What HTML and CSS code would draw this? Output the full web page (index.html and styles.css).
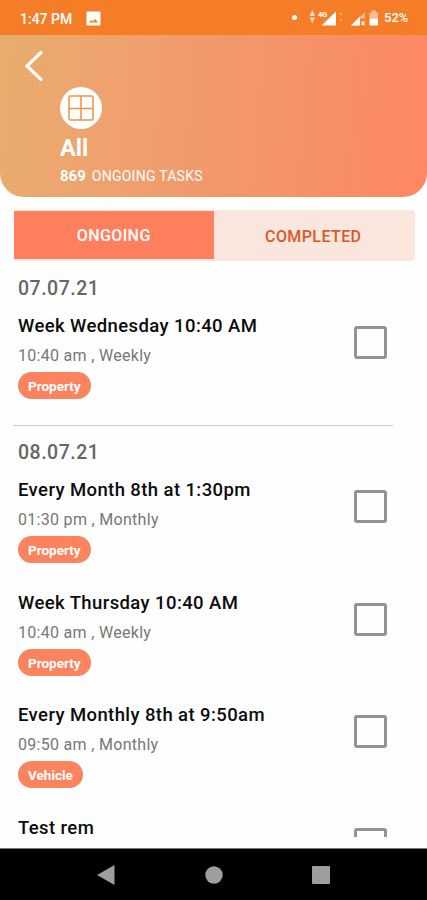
FILE: index.html
```html
<!DOCTYPE html>
<html lang="en">
<head>
    <meta charset="UTF-8">
    <meta name="viewport" content="width=device-width, initial-scale=1.0">
    <title>All Tasks</title>
    <link rel="stylesheet" href="styles.css">
</head>
<body>
    <div class="status-bar">
        <span class="time">1:47 PM</span>
        <svg class="picture" width="15" height="15" viewBox="0 0 15 15">
            <rect x="0.5" y="0.5" width="14" height="14" rx="1" fill="#fff"/>
            <path d="M3 11.5L5 9L6.8 10.5L9.3 8L12 11.5Z" fill="#f67d27"/>
        </svg>
        <svg class="signals" width="90" height="20" viewBox="0 0 90 20">
            <circle cx="5.5" cy="8.5" r="2.5" fill="#fff"/>
            <path d="M20.5 7L23.3 1L26.1 7ZM20.5 8.5L23.3 14.500L26.1 8.5Z" fill="#fff" opacity="0.7"/>
            <text x="29" y="7.5" font-size="7.5" font-weight="bold" fill="#fff">4G</text>
            <path d="M32.5 16.500L47 2.500V16.500Z" fill="#fff"/>
            <path d="M50 6L51.8 3L53.6 6ZM50 10L51.8 13L53.6 10Z" fill="#fff" opacity="0.3"/>
            <path d="M62 16.500L76 3V9.5H70.500V16.500Z" fill="#fff" opacity="0.45"/>
            <path d="M62 16.500L71 7.5V16.500Z" fill="#fff"/>
            <path d="M72.500 12.500L75.500 16M75.500 12.500L72.500 16" stroke="#fff" stroke-width="1.2"/>
            <path d="M80.500 3.500H83V1.500H87V3.500H89V9.500H80.500Z" fill="#fff" opacity="0.5"/>
            <path d="M80.500 9.500H89V16.500H80.500Z" fill="#fff"/>
        </svg>
        <span class="battery">52%</span>
    </div>

    <div class="header">
        <a href="#" class="back">
            <svg width="20" height="32" viewBox="0 0 20 32">
                <path d="M17 2.5L3 16L17 29.5" fill="none" stroke="#fff" stroke-width="3.2" stroke-linecap="round"/>
            </svg>
        </a>
        <div class="category">
            <div class="category-icon">
                <svg width="26" height="26" viewBox="0 0 26 26" fill="none" stroke="#ee9340" stroke-width="1.5">
                    <rect x="1" y="1" width="24" height="24" rx="1.5"/>
                    <path d="M13 1V25M1 13.5H25"/>
                </svg>
            </div>
            <h1>All</h1>
            <p><b>869</b><span>ONGOING TASKS</span></p>
        </div>
    </div>

    <div class="tabs">
        <a href="#" class="tab active"><span>ONGOING</span></a>
        <a href="#" class="tab"><span>COMPLETED</span></a>
    </div>

    <div class="list">
        <h2>07.07.21</h2>
        <div class="task">
            <div class="info">
                <h3>Week Wednesday 10:40 AM</h3>
                <p>10:40 am , Weekly</p>
                <span class="tag">Property</span>
            </div>
            <span class="checkbox"></span>
        </div>
        <hr>
        <h2>08.07.21</h2>
        <div class="task">
            <div class="info">
                <h3>Every Month 8th at 1:30pm</h3>
                <p>01:30 pm , Monthly</p>
                <span class="tag">Property</span>
            </div>
            <span class="checkbox"></span>
        </div>
        <div class="task">
            <div class="info">
                <h3>Week Thursday 10:40 AM</h3>
                <p>10:40 am , Weekly</p>
                <span class="tag">Property</span>
            </div>
            <span class="checkbox"></span>
        </div>
        <div class="task">
            <div class="info">
                <h3>Every Monthly 8th at 9:50am</h3>
                <p>09:50 am , Monthly</p>
                <span class="tag">Vehicle</span>
            </div>
            <span class="checkbox"></span>
        </div>
        <div class="task">
            <div class="info">
                <h3>Test rem</h3>
            </div>
            <span class="checkbox"></span>
        </div>
    </div>

    <div class="nav-bar">
        <svg width="20" height="22" viewBox="0 0 20 22"><path d="M1 11L18.5 1V21Z" fill="#9e9e9e"/></svg>
        <svg width="18" height="18" viewBox="0 0 18 18"><circle cx="9" cy="9" r="8.7" fill="#9e9e9e"/></svg>
        <svg width="18" height="18" viewBox="0 0 18 18"><rect width="18" height="18" rx="1" fill="#9e9e9e"/></svg>
    </div>
</body>
</html>
```
FILE: styles.css
```css
* {
    box-sizing: border-box;
}

body {
    display: flex;
    flex-direction: column;
    width: 427px;
    height: 900px;
    margin: 0;
    overflow: hidden;
    font-family: Roboto, sans-serif;
    background: #fefefe;
}

h1, h2, h3, p {
    margin: 0;
}

a {
    color: inherit;
    text-decoration: none;
}

svg {
    display: block;
}

.status-bar {
    display: flex;
    align-items: center;
    flex-shrink: 0;
    height: 35px;
    padding: 2px 17px 0 20px;
    background: #f67d27;
    color: #fff;
    font-size: 14px;
    font-weight: 500;
}

.time {
    width: 66px;
}

.signals {
    margin-left: auto;
    margin-right: 5px;
}

.battery {
    width: 26px;
    margin-top: -2px;
    font-size: 13px;
}

.header {
    flex-shrink: 0;
    height: 162px;
    padding: 15px 24px 0;
    border-radius: 0 0 24px 24px;
    background: linear-gradient(95deg, #e8ad6d, #efa16e 28%, #f1986a 52%, #fd8762);
    color: #fff;
}

.back {
    display: block;
    width: 20px;
}

.category {
    padding: 5px 0 0 36px;
}

.category-icon {
    display: flex;
    align-items: center;
    justify-content: center;
    width: 42px;
    height: 42px;
    border-radius: 50%;
    background: #fff;
}

.category h1 {
    margin-top: 5px;
    font-size: 23.5px;
    font-weight: 700;
    line-height: 28px;
}

.category p {
    display: flex;
    gap: 6px;
    margin-top: 4px;
    font-size: 14px;
    letter-spacing: 0.25px;
    line-height: 20px;
}

.category b {
    font-size: 15px;
    letter-spacing: 0;
}

.tabs {
    display: flex;
    flex-shrink: 0;
    height: 51px;
    margin: 13px 12px 0 14px;
    border-radius: 4px;
    background: #fae6dd;
    color: #dc582b;
    font-size: 16px;
    font-weight: 500;
    letter-spacing: 0.4px;
}

.tab {
    display: flex;
    flex: 1;
    align-items: center;
    justify-content: center;
    padding: 1px 2px 0 0;
}

.tab.active {
    margin: 1px 0 2px;
    padding-right: 0;
    background: #ff7f5f;
    color: #fff;
}

.list {
    height: 576px;
    padding: 7px 12px 0 13px;
    overflow: hidden;
}

.list h2 {
    height: 38px;
    padding-left: 5px;
    color: #666;
    font-size: 19.5px;
    font-weight: 500;
    letter-spacing: 0.5px;
    line-height: 42px;
}

.list hr {
    width: 380px;
    height: 1px;
    margin: 6.5px 0 6.2px;
    border: none;
    background: #ccc;
}

.task {
    display: flex;
    justify-content: space-between;
    height: 112.5px;
    padding: 10px 28px 0 5px;
}

.task h3 {
    color: #0c0c0c;
    font-size: 18.5px;
    font-weight: 500;
    letter-spacing: 0.4px;
    line-height: 20px;
}

.task p {
    margin-top: 10px;
    color: #777;
    font-size: 16px;
    letter-spacing: 0.3px;
    line-height: 20px;
}

.tag {
    display: inline-block;
    height: 27px;
    margin-top: 6px;
    padding: 0 10px;
    border-radius: 14px;
    background: #fb845e;
    color: #fff;
    font-size: 13.5px;
    font-weight: 700;
    line-height: 28px;
}

.checkbox {
    width: 33px;
    height: 33px;
    margin-top: 10px;
    border: 3px solid #939393;
    border-radius: 3px;
}

.nav-bar {
    display: flex;
    align-items: center;
    justify-content: space-between;
    flex-shrink: 0;
    height: 52px;
    margin-top: auto;
    padding: 0 97px 0 96px;
    border-top: 1px solid #777;
    background: #000;
}
```
